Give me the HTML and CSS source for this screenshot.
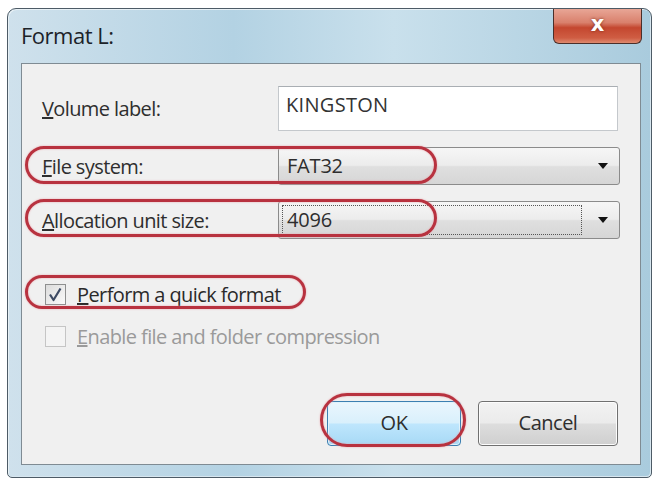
FILE: index.html
```html
<!DOCTYPE html>
<html lang="en">
<head>
    <meta charset="UTF-8">
    <title>Format L:</title>
    <link rel="stylesheet" href="styles.css">
</head>
<body>
    <div class="window">
        <div class="titlebar">
            <span class="title">Format L:</span>
            <div class="close-btn">x</div>
        </div>
        <div class="panel">
            <div class="fields">
                <div class="field-label"><u>V</u>olume label:</div>
                <div class="textbox">KINGSTON</div>

                <div class="field-label"><u>F</u>ile system:</div>
                <div class="combo">
                    <span class="combo-value">FAT32</span>
                    <span class="arrow"></span>
                </div>

                <div class="field-label"><u>A</u>llocation unit size:</div>
                <div class="combo">
                    <span class="combo-value focused">4096</span>
                    <span class="arrow"></span>
                </div>
            </div>

            <div class="checks">
                <div class="check-row">
                    <span class="checkbox">
                        <svg width="19" height="19" viewBox="0 0 19 19">
                            <path d="M4 9.5 L7.5 15 L14.5 3.5" fill="none" stroke="#3d4a63" stroke-width="2.2" stroke-linejoin="round"/>
                        </svg>
                    </span>
                    <span><u>P</u>erform a quick format</span>
                </div>
                <div class="check-row disabled">
                    <span class="checkbox"></span>
                    <span><u>E</u>nable file and folder compression</span>
                </div>
            </div>

            <div class="buttons">
                <div class="btn btn-default">OK</div>
                <div class="btn">Cancel</div>
            </div>

            <!-- red marks drawn over the dialog -->
            <div class="mark mark-fs"></div>
            <div class="mark mark-alloc"></div>
            <div class="mark mark-quick"></div>
            <div class="mark mark-ok"></div>
        </div>
    </div>
</body>
</html>
```

FILE: styles.css
```css
* {
    margin: 0;
    padding: 0;
    box-sizing: border-box;
}

body {
    background: #fff;
    font-family: 'Open Sans', 'Noto Sans', sans-serif;
    font-size: 20px;
    color: #262626;
    padding: 8px 0 0 7px;
}

.window {
    width: 645px;
    height: 470px;
    border: 1px solid #4d5b66;
    border-radius: 9px 9px 5px 5px;
    background: linear-gradient(90deg, #cfe1ec 0%, #b3d2e3 35%, #c9e0ec 60%, #a9cbdd 100%);
    display: flex;
    flex-direction: column;
    padding: 0 10px 12px 13px;
    box-shadow: inset 1px 1px 0 #e8f1f6, inset -1px -1px 0 #d7e6ef;
}

.titlebar {
    height: 54px;
    display: flex;
    justify-content: space-between;
    align-items: flex-start;
}

.title {
    margin-top: 11px;
    font-size: 22px;
    color: #1c2329;
    letter-spacing: -0.5px;
}

.close-btn {
    width: 89px;
    height: 35px;
    margin-right: -1px;
    border: 1px solid #4a2f2a;
    border-top: none;
    border-radius: 0 0 6px 6px;
    background: linear-gradient(#e8a696 0%, #d9806c 40%, #c4472f 55%, #cf5d43 85%, #de8a6f 100%);
    color: #fff;
    font-family: 'DejaVu Sans', sans-serif;
    font-weight: bold;
    font-size: 21px;
    line-height: 30px;
    text-align: center;
    text-shadow: 0 0 3px #7a2a1a;
}

.panel {
    flex: 1;
    position: relative;
    background: #f0f0f0;
    border: 1px solid #7f8b93;
    padding: 22px 20px 0 20px;
}

.fields {
    display: grid;
    grid-template-columns: 236px 1fr;
    align-items: center;
    row-gap: 16px;
}

.field-label {
    color: #2e2e2e;
    letter-spacing: -0.6px;
}

.textbox {
    height: 45px;
    margin-right: 2px;
    background: #fff;
    border: 1px solid #c4c8cc;
    border-top-color: #a9aeb3;
    padding: 4px 7px;
    color: #333;
    letter-spacing: 0.3px;
}

.combo {
    height: 38px;
    border: 1px solid #8b8b8b;
    border-radius: 3px;
    background: linear-gradient(#f6f6f6 0%, #ececec 48%, #dfdfdf 52%, #d6d6d6 100%);
    display: flex;
    align-items: center;
    padding: 3px;
}

.combo-value {
    flex: 1;
    height: 100%;
    padding: 1px 5px;
    color: #2e2e2e;
    letter-spacing: -0.2px;
}

.combo-value.focused {
    border: 1px dotted #555;
    padding: 0 4px;
    margin-right: 4px;
}

.arrow {
    width: 0;
    height: 0;
    margin: 0 8px 0 12px;
    border-left: 5px solid transparent;
    border-right: 5px solid transparent;
    border-top: 6px solid #111;
}

.checks {
    margin-top: 43px;
    display: flex;
    flex-direction: column;
    gap: 17px;
    padding-left: 3px;
}

.check-row {
    display: flex;
    align-items: center;
    gap: 11px;
    height: 25px;
    color: #2a2a2a;
    letter-spacing: -0.6px;
}

.check-row.disabled {
    color: #9a9a9a;
}

.checkbox {
    width: 21px;
    height: 21px;
    border: 1px solid #8e8f8f;
    background: linear-gradient(135deg, #dcdcdc, #fafafa);
    display: flex;
}

.check-row.disabled .checkbox {
    border-color: #c5c5c5;
    background: #f4f4f4;
}

.buttons {
    margin-top: 52px;
    display: flex;
    justify-content: flex-end;
    gap: 17px;
    padding-right: 2px;
}

.btn {
    width: 140px;
    height: 45px;
    border: 1px solid #707070;
    border-radius: 4px;
    background: linear-gradient(#f2f2f2 0%, #ebebeb 48%, #dddddd 52%, #cfcfcf 100%);
    box-shadow: inset 0 0 0 1px #fcfcfc;
    text-align: center;
    line-height: 42px;
    color: #2e2e2e;
    letter-spacing: -0.5px;
}

.btn-default {
    width: 134px;
    border-color: #3c7fb1;
    background: linear-gradient(#eaf6fd 0%, #d9f0fc 48%, #bee6fd 52%, #a7d9f5 100%);
    box-shadow: inset 0 0 0 1px #e0f3fc;
}

.mark {
    position: absolute;
    border: 3px solid #b8323f;
    border-radius: 999px;
    box-shadow: 0 0 2px #e9a0a8, inset 0 0 2px #e9a0a8;
}

.mark-fs {
    left: 3px;
    top: 82px;
    width: 412px;
    height: 38px;
}

.mark-alloc {
    left: 3px;
    top: 135px;
    width: 412px;
    height: 38px;
}

.mark-quick {
    left: 3px;
    top: 211px;
    width: 281px;
    height: 34px;
}

.mark-ok {
    left: 298px;
    top: 329px;
    width: 146px;
    height: 54px;
}
```
